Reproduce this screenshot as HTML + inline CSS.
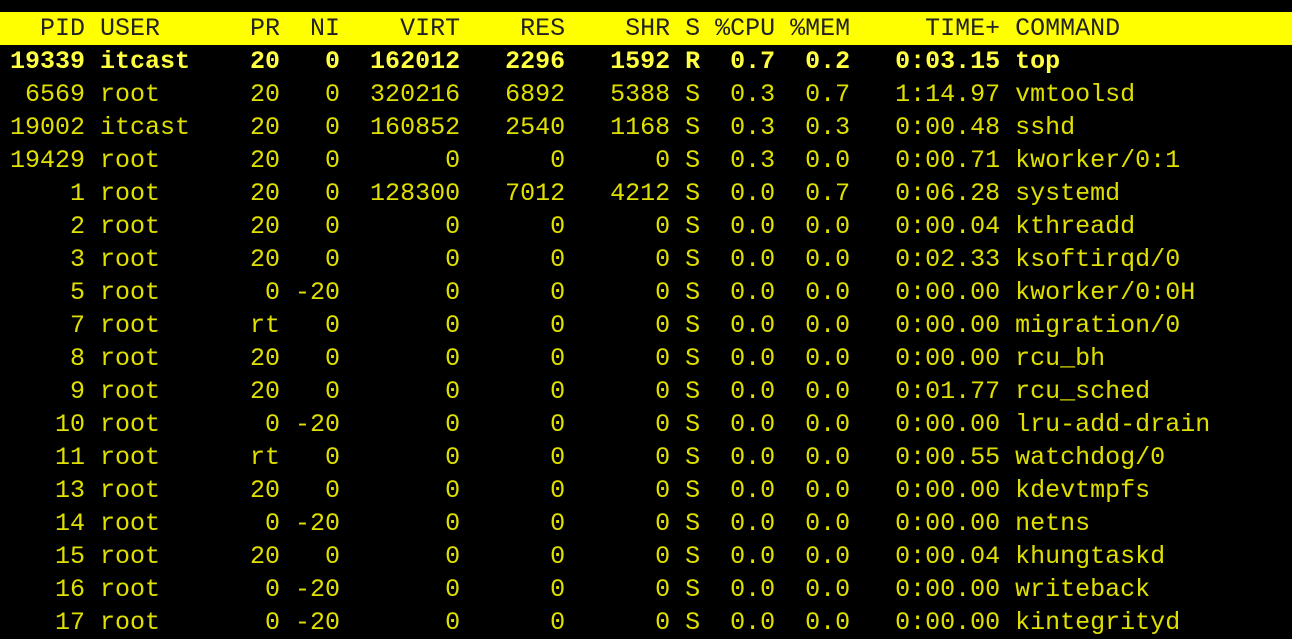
<!DOCTYPE html>
<html><head><meta charset="utf-8"><style>
html,body{margin:0;padding:0;background:#000;width:1292px;height:629px;overflow:hidden}
pre{margin:0;position:absolute;left:10px;top:12px;font-family:"Liberation Mono","DejaVu Sans Mono",monospace;font-size:25px;line-height:33px;color:#e0e000;letter-spacing:0px}
.h{background:#ffff00;color:#222;display:block;margin-left:-10px;padding-left:10px;width:1282px}
.b{font-weight:bold;color:#ffff40}
</style></head><body>
<pre><span class="h">  PID USER      PR  NI    VIRT    RES    SHR S %CPU %MEM     TIME+ COMMAND</span><span class="b">19339 itcast    20   0  162012   2296   1592 R  0.7  0.2   0:03.15 top</span>
 6569 root      20   0  320216   6892   5388 S  0.3  0.7   1:14.97 vmtoolsd
19002 itcast    20   0  160852   2540   1168 S  0.3  0.3   0:00.48 sshd
19429 root      20   0       0      0      0 S  0.3  0.0   0:00.71 kworker/0:1
    1 root      20   0  128300   7012   4212 S  0.0  0.7   0:06.28 systemd
    2 root      20   0       0      0      0 S  0.0  0.0   0:00.04 kthreadd
    3 root      20   0       0      0      0 S  0.0  0.0   0:02.33 ksoftirqd/0
    5 root       0 -20       0      0      0 S  0.0  0.0   0:00.00 kworker/0:0H
    7 root      rt   0       0      0      0 S  0.0  0.0   0:00.00 migration/0
    8 root      20   0       0      0      0 S  0.0  0.0   0:00.00 rcu_bh
    9 root      20   0       0      0      0 S  0.0  0.0   0:01.77 rcu_sched
   10 root       0 -20       0      0      0 S  0.0  0.0   0:00.00 lru-add-drain
   11 root      rt   0       0      0      0 S  0.0  0.0   0:00.55 watchdog/0
   13 root      20   0       0      0      0 S  0.0  0.0   0:00.00 kdevtmpfs
   14 root       0 -20       0      0      0 S  0.0  0.0   0:00.00 netns
   15 root      20   0       0      0      0 S  0.0  0.0   0:00.04 khungtaskd
   16 root       0 -20       0      0      0 S  0.0  0.0   0:00.00 writeback
   17 root       0 -20       0      0      0 S  0.0  0.0   0:00.00 kintegrityd</pre>
</body></html>
